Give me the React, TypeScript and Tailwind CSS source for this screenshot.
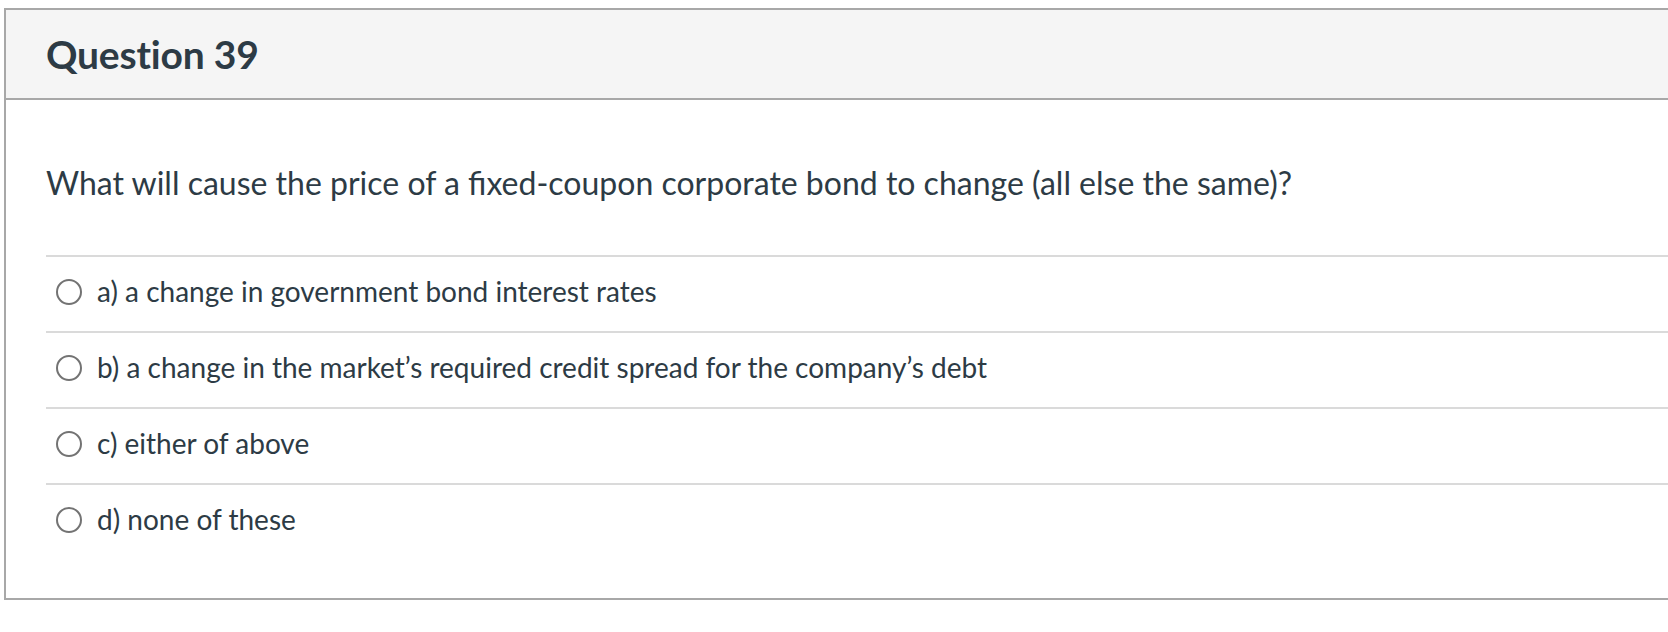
import React from 'react';

const ANSWERS = [
  'a) a change in government bond interest rates',
  'b) a change in the market’s required credit spread for the company’s debt',
  'c) either of above',
  'd) none of these',
];

export default function App() {
  return (
    <div className="min-h-[632px] bg-white pt-[8px] pl-[4px] text-[#2d3b45] [font-family:Lato,'Open_Sans',sans-serif]">
      <div className="border-l-2 border-t-2 border-b-2 border-[#a8a8a8]">
        {/* header */}
        <div className="flex h-[90px] items-center border-b-2 border-[#a8a8a8] bg-[#f5f5f5] px-[40px]">
          <h2 className="text-[39px] font-bold leading-none tracking-[-0.2px]">Question 39</h2>
        </div>

        {/* body */}
        <div className="pl-[40px] pb-[39px]">
          <p className="mt-[64px] mb-[53px] text-[32px] leading-[38px]">
            What will cause the price of a fixed-coupon corporate bond to change (all else the same)?
          </p>
          <div>
            {ANSWERS.map((a) => (
              <label key={a} className="flex h-[76px] items-center border-t-2 border-[#dadada] pb-[4px] pl-[10px]">
                <span className="h-[26px] w-[26px] shrink-0 rounded-full border-2 border-[#737373] bg-white" />
                <span className="ml-[15px] pb-[3px] text-[28px] leading-none">{a}</span>
              </label>
            ))}
          </div>
        </div>
      </div>
    </div>
  );
}
